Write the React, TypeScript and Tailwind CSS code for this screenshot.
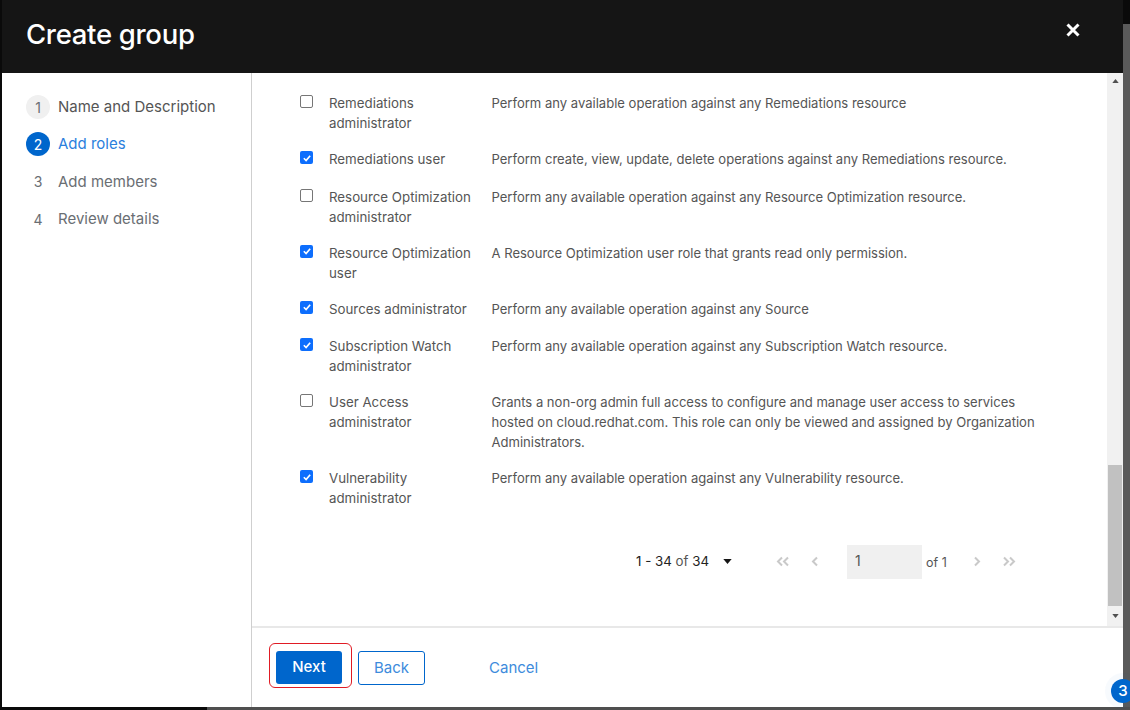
import React from "react";

const font = "font-['Inter','Noto_Sans',sans-serif]";

const rows: { name: string[]; desc: string[]; on: boolean }[] = [
  { name: ["Remediations", "administrator"], desc: ["Perform any available operation against any Remediations resource"], on: false },
  { name: ["Remediations user"], desc: ["Perform create, view, update, delete operations against any Remediations resource."], on: true },
  { name: ["Resource Optimization", "administrator"], desc: ["Perform any available operation against any Resource Optimization resource."], on: false },
  { name: ["Resource Optimization", "user"], desc: ["A Resource Optimization user role that grants read only permission."], on: true },
  { name: ["Sources administrator"], desc: ["Perform any available operation against any Source"], on: true },
  { name: ["Subscription Watch", "administrator"], desc: ["Perform any available operation against any Subscription Watch resource."], on: true },
  {
    name: ["User Access", "administrator"],
    desc: [
      "Grants a non-org admin full access to configure and manage user access to services",
      "hosted on cloud.redhat.com. This role can only be viewed and assigned by Organization",
      "Administrators.",
    ],
    on: false,
  },
  { name: ["Vulnerability", "administrator"], desc: ["Perform any available operation against any Vulnerability resource."], on: true },
];

function Check({ on }: { on: boolean }) {
  if (on)
    return (
      <span className="flex h-[13px] w-[13px] items-center justify-center rounded-[2px] bg-[#0d6efd]">
        <svg viewBox="0 0 12 12" className="h-[10px] w-[10px]">
          <path d="M2.2 6.3 L4.9 9 L9.8 3.2" fill="none" stroke="#fff" strokeWidth="2" />
        </svg>
      </span>
    );
  return <span className="block h-[13px] w-[13px] rounded-[2px] border border-[#767676] bg-white" />;
}

function Step({ n, label, state }: { n: number; label: string; state: "done" | "active" | "todo" }) {
  const circle =
    state === "active"
      ? "bg-[#0066cc] text-white"
      : state === "done"
        ? "bg-[#f0f0f0] text-[#6a6e73]"
        : "text-[#6a6e73]";
  const text = state === "active" ? "text-[#2b80dd]" : state === "done" ? "text-[#555]" : "text-[#6a6e73]";
  return (
    <div className="flex h-[24px] items-center gap-[8px]">
      <span className={`flex h-[24px] w-[24px] items-center justify-center rounded-full text-[14px] ${circle}`}>{n}</span>
      <span className={`text-[15px] ${text}`}>{label}</span>
    </div>
  );
}

function Chevrons({ double, dir }: { double?: boolean; dir: "l" | "r" }) {
  const d = dir === "l" ? "M6 1.5 L2 5.5 L6 9.5" : "M2 1.5 L6 5.5 L2 9.5";
  const d2 = dir === "l" ? "M12 1.5 L8 5.5 L12 9.5" : "M8 1.5 L12 5.5 L8 9.5";
  return (
    <svg viewBox={double ? "0 0 14 11" : "0 0 8 11"} className={double ? "h-[11px] w-[14px]" : "h-[11px] w-[8px]"}>
      <path d={d} fill="none" stroke="#c9c9c9" strokeWidth="2" />
      {double && <path d={d2} fill="none" stroke="#c9c9c9" strokeWidth="2" />}
    </svg>
  );
}

export default function App() {
  return (
    <div className={`relative flex h-[710px] w-[1130px] overflow-hidden bg-[#0a0a0a] ${font}`}>
      <div className="flex h-[707px] w-[1121px] ml-[2px] flex-col bg-white">
        <header className="flex h-[73px] shrink-0 items-center justify-between bg-[#151515] pl-[24px] pr-[42px]">
          <h1 className="mb-[4px] text-[27.5px] font-medium tracking-[-0.3px] text-white">Create group</h1>
          <svg viewBox="0 0 16 16" className="mb-[13px] h-[16px] w-[16px]">
            <path d="M2.5 2.5 L13.5 13.5 M13.5 2.5 L2.5 13.5" stroke="#fff" strokeWidth="3" />
          </svg>
        </header>
        <div className="flex min-h-0 flex-1">
          <nav className="flex w-[250px] shrink-0 flex-col gap-[13.4px] border-r border-[#cfcfcf] pl-[24px] pt-[22px]">
            <Step n={1} label="Name and Description" state="done" />
            <Step n={2} label="Add roles" state="active" />
            <Step n={3} label="Add members" state="todo" />
            <Step n={4} label="Review details" state="todo" />
          </nav>
          <div className="flex min-w-0 flex-1 flex-col">
            <div className="flex h-[555px] shrink-0 border-b-2 border-[#e8e8e8]">
              <main className="min-w-0 flex-1 pt-[12px] pl-[48px] text-[13.3px] leading-[20px] text-[#555]">
                {rows.map((r, i) => (
                  <div key={i} className="flex min-h-[37.5px] py-[8px]">
                    <div className="w-[29px] shrink-0 pt-[2px]">
                      <Check on={r.on} />
                    </div>
                    <div className="w-[162.5px] shrink-0">
                      {r.name.map((l) => (
                        <div key={l} className="whitespace-nowrap">{l}</div>
                      ))}
                    </div>
                    <div className="text-[13.05px]">
                      {r.desc.map((l) => (
                        <div key={l} className="whitespace-nowrap">{l}</div>
                      ))}
                    </div>
                  </div>
                ))}
                <div className="mt-[28px] flex h-[34px] items-center pl-[336px] text-[#333]">
                  <span className="whitespace-nowrap text-[13.3px] text-[#222]">
                    1 - 34 <span className="text-[#555]">of</span> 34
                  </span>
                  <svg viewBox="0 0 10 6" className="ml-[14px] h-[5px] w-[9px]">
                    <path d="M0 0 H10 L5 6 Z" fill="#151515" />
                  </svg>
                  <span className="ml-[44px] flex items-center">
                    <Chevrons double dir="l" />
                    <span className="ml-[21px] flex"><Chevrons dir="l" /></span>
                  </span>
                  <div className="ml-[28px] mt-[1px] flex h-[34px] w-[75px] items-center bg-[#f0f0f0] pb-[1px] pl-[8px] text-[14px] text-[#555]">1</div>
                  <span className="ml-[4px] mt-[3px] whitespace-nowrap text-[12.5px] text-[#555]">of 1</span>
                  <span className="ml-[26px] flex items-center">
                    <Chevrons dir="r" />
                    <span className="ml-[21px] flex"><Chevrons double dir="r" /></span>
                  </span>
                </div>
              </main>
              <div className="flex w-[16px] shrink-0 flex-col items-center bg-[#f1f1f1]">
                <div className="flex h-[16px] items-center justify-center">
                  <svg viewBox="0 0 8 5" className="h-[4px] w-[7px]"><path d="M0 5 L4 0 L8 5 Z" fill="#505050" /></svg>
                </div>
                <div className="flex-1 w-full px-[1px]">
                  <div className="mt-[376px] h-[141px] w-full bg-[#c1c1c1]" />
                </div>
                <div className="flex h-[21px] items-center justify-center">
                  <svg viewBox="0 0 8 5" className="h-[4px] w-[7px]"><path d="M0 0 L4 5 L8 0 Z" fill="#505050" /></svg>
                </div>
              </div>
            </div>
            <footer className="flex flex-1 items-start pl-[17px] pt-[15px] text-[15px]">
              <div className="rounded-[6px] border border-[#e01b24] pb-[3px] pl-[6px] pr-[9px] pt-[7px]">
                <button className="block h-[33px] w-[66px] rounded-[3px] bg-[#0066cc] font-medium text-white">Next</button>
              </div>
              <button className="ml-[6px] mt-[8px] h-[34px] w-[67px] rounded-[3px] border border-[#0066cc] text-[#3d8bdc]">Back</button>
              <button className="ml-[64px] mt-[8px] h-[34px] text-[#3d8bdc]">Cancel</button>
            </footer>
          </div>
        </div>
      </div>
      <div className="flex-1 flex flex-col">
        <div className="h-[24px] bg-[#0a0a0a]" />
        <div className="flex-1 bg-[#5a5a5a]" />
      </div>
      <div className="absolute bottom-0 left-[207px] right-0 h-[3px] bg-[#4f4f4f]" />
      <div className="absolute left-[1111px] top-[679px] flex h-[24px] w-[24px] items-center justify-center rounded-full bg-[#0066cc] text-[15px] font-medium text-white shadow-[0_0_0_6px_rgba(0,102,204,0.03)]">3</div>
    </div>
  );
}
